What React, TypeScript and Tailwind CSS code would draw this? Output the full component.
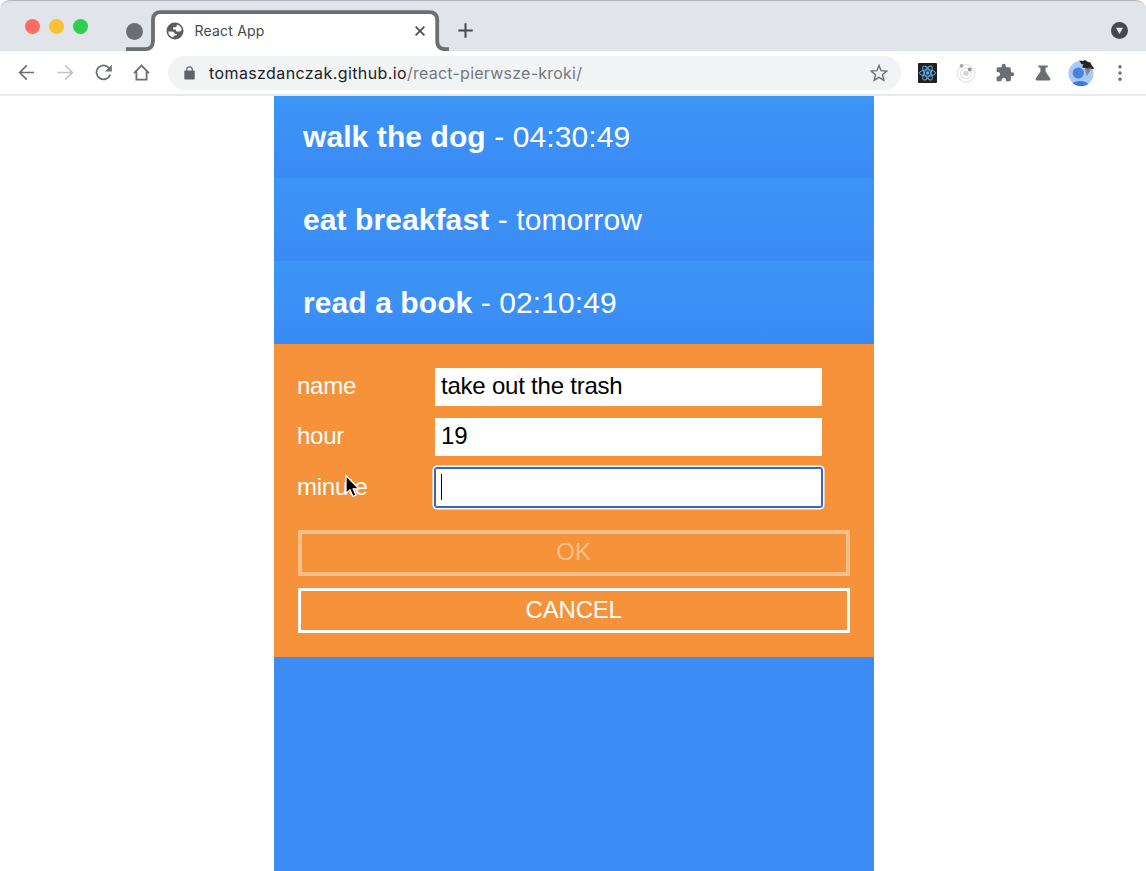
import React from "react";

const tasks = [
  { name: "walk the dog", time: "04:30:49", box: "h-[82px]" },
  { name: "eat breakfast", time: "tomorrow", box: "h-[83px]" },
  { name: "read a book", time: "02:10:49", box: "h-[83px]" },
];

function Globe() {
  return (
    <svg className="h-[18px] w-[18px] shrink-0" viewBox="0 0 18 18">
      <circle cx="9" cy="9" r="8.5" fill="#5a5c60" />
      <path d="M2.2 9.4 H5.6 Q8.6 9.4 8.8 12 H10.6 V13.6 H7.6 V15.6 Q2.6 14.4 2.2 9.4 Z" fill="#fff" />
      <path d="M10.8 2.4 Q14.8 3.4 15.8 7.6 L14.4 9.4 H10.6 Q9.8 9.2 9.8 7.6 H7.2 V5.2 H9.4 Q10.8 5 10.8 3.8 Z" fill="#fff" />
    </svg>
  );
}

function TabStrip() {
  return (
    <div className="bg-white">
      <div className="relative flex h-[51px] items-center rounded-t-[10px] border-t border-[#b4b5b8] bg-[#e1e4e9]">
        <svg className="absolute left-[125px] top-[-1px] h-[52px] w-[325px]" viewBox="0 0 325 52">
          <path d="M1 51 H19 Q28 50 28 41 V20 Q28 12 36 12 H304 Q312 12 312 20 V41 Q312 50 323 51 V52 H1 Z" fill="#fff" />
          <path d="M1 49.2 H20 Q28 49.2 28 41 V20 Q28 12.2 36 12.2 H304 Q312.2 12.2 312.2 20 V41 Q312.2 49.2 321 49.2 H324" fill="none" stroke="#6b6e72" strokeWidth="3.8" />
        </svg>
        <div className="relative flex h-full w-full items-center">
          <div className="ml-[25px] flex h-[52px] items-start gap-[9px] pt-[18.5px]">
            <span className="h-[15px] w-[15px] rounded-full bg-[#fe6b60]" />
            <span className="h-[15px] w-[15px] rounded-full bg-[#fcc034]" />
            <span className="h-[15px] w-[15px] rounded-full bg-[#2dd04a]" />
          </div>
          <span className="ml-[38px] mt-[10px] h-[17px] w-[17px] rounded-full bg-[#6b6e72]" />
          <div className="ml-[23px] mt-[9px] flex w-[260px] items-center">
            <Globe />
            <span className="ml-[10.5px] grow font-['Inter','Roboto',sans-serif] text-[14px] tracking-[0.2px] text-[#46484c]">React App</span>
            <svg className="h-[12px] w-[12px]" viewBox="0 0 12 12">
              <path d="M1.6 1.6 L10.4 10.4 M10.4 1.6 L1.6 10.4" stroke="#46484c" strokeWidth="1.6" />
            </svg>
          </div>
          <svg className="ml-[32px] mt-[9px] h-[15px] w-[15px]" viewBox="0 0 15 15">
            <path d="M7.5 0.3 V14.7 M0.3 7.5 H14.7" stroke="#46484c" strokeWidth="2" />
          </svg>
          <svg className="ml-auto mr-[18px] mt-[9px] h-[17px] w-[17px]" viewBox="0 0 17 17">
            <circle cx="8.5" cy="8.5" r="8.5" fill="#46484c" />
            <path d="M4.9 5.8 H12.1 L8.5 12 Z" fill="#e1e4e9" />
          </svg>
        </div>
      </div>
    </div>
  );
}

function Toolbar() {
  return (
    <div className="flex h-[43px] shrink-0 items-center bg-white">
      <svg className="ml-[18px] h-[17px] w-[17px]" viewBox="0 0 17 17" fill="none" stroke="#6b6e72" strokeWidth="1.7">
        <path d="M16 8.5 H2 M8.8 1.4 L1.7 8.5 L8.8 15.6" />
      </svg>
      <svg className="ml-[22px] h-[17px] w-[17px]" viewBox="0 0 17 17" fill="none" stroke="#c3c4c6" strokeWidth="1.7">
        <path d="M0.5 8.5 H15 M8.2 1.4 L15.3 8.5 L8.2 15.6" />
      </svg>
      <svg className="ml-[21px] h-[17px] w-[17px]" viewBox="0 0 17 17">
        <path d="M14.2 4.2 A7 7 0 1 0 15.2 10.4" fill="none" stroke="#6b6e72" strokeWidth="1.8" />
        <path d="M16.8 0.8 V7.5 H10 Z" fill="#6b6e72" />
      </svg>
      <svg className="ml-[21px] h-[17px] w-[17px]" viewBox="0 0 17 17" fill="none" stroke="#6b6e72" strokeWidth="1.8">
        <path d="M1 9.2 L8.5 1.6 L16 9.2 M3.4 7.4 V15.6 H13.6 V7.4" />
      </svg>
      <div className="ml-[18px] flex h-[34px] w-[733px] items-center rounded-full bg-[#f1f3f4] pl-[16px] pr-[13px]">
        <svg className="h-[14px] w-[11px]" viewBox="0 0 11 14">
          <rect x="0.3" y="4.6" width="10.4" height="8.9" rx="1" fill="#5f6368" />
          <path d="M2.7 6 V3.6 A2.8 2.8 0 0 1 8.3 3.6 V6" fill="none" stroke="#5f6368" strokeWidth="1.2" />
        </svg>
        <span className="ml-[14px] grow whitespace-nowrap font-['Inter','Roboto',sans-serif] text-[16px] tracking-[0.4px] text-[#202124]">
          tomaszdanczak.github.io<span className="tracking-[0.24px] text-[#75787c]">/react-pierwsze-kroki/</span>
        </span>
        <svg className="h-[18px] w-[18px]" viewBox="0 0 18 18">
          <path d="M9 1.5 L11.1 6.7 L16.8 7.1 L12.5 10.8 L13.9 16.3 L9 13.3 L4.1 16.3 L5.5 10.8 L1.2 7.1 L6.9 6.7 Z" fill="none" stroke="#6b6e72" strokeWidth="1.4" />
        </svg>
      </div>
      <svg className="ml-[17px] h-[20px] w-[19px]" viewBox="0 0 19 20" fill="none" stroke="#5fabe8">
        <rect width="19" height="20" rx="1" fill="#202020" stroke="none" />
        <g strokeWidth="1">
          <ellipse cx="9.5" cy="10" rx="8" ry="3.1" />
          <ellipse cx="9.5" cy="10" rx="8" ry="3.1" transform="rotate(60 9.5 10)" />
          <ellipse cx="9.5" cy="10" rx="8" ry="3.1" transform="rotate(120 9.5 10)" />
        </g>
        <circle cx="9.5" cy="10" r="1.7" fill="#5fabe8" stroke="none" />
      </svg>
      <svg className="ml-[19px] h-[20px] w-[20px]" viewBox="0 0 20 20">
        <circle cx="10" cy="10.3" r="8.8" fill="none" stroke="#dedede" />
        <circle cx="10" cy="10.3" r="5.4" fill="none" stroke="#dedede" />
        <circle cx="10" cy="10.3" r="2.6" fill="#d5d5d5" />
        <circle cx="5.5" cy="2.8" r="1.9" fill="#a4a4a4" />
        <circle cx="13.8" cy="6.5" r="1.9" fill="#929292" />
      </svg>
      <svg className="ml-[18.5px] h-[20px] w-[20px]" viewBox="0 0 24 24" fill="#6b6e72">
        <path d="M20.5 11H19V7c0-1.1-.9-2-2-2h-4V3.5a2.5 2.5 0 0 0-5 0V5H4c-1.1 0-1.99.9-1.99 2v3.8H3.5c1.49 0 2.7 1.21 2.7 2.7s-1.21 2.7-2.7 2.7H2V20c0 1.1.9 2 2 2h3.8v-1.5c0-1.49 1.21-2.7 2.7-2.7s2.7 1.21 2.7 2.7V22H17c1.1 0 2-.9 2-2v-4h1.5a2.5 2.5 0 0 0 0-5z" />
      </svg>
      <svg className="ml-[20.5px] h-[16px] w-[16px]" viewBox="0 0 16 16" fill="#6b6e72">
        <path d="M3.3 0.6 H12.7 V2.4 H10.6 V6.4 L15.2 13.5 Q16 15.4 14 15.5 H2 Q0 15.4 0.8 13.5 L5.4 6.4 V2.4 H3.3 Z" />
      </svg>
      <svg className="ml-[17px] h-[28px] w-[28px]" viewBox="0 0 28 28">
        <clipPath id="avatar"><circle cx="13" cy="14.5" r="12.7" /></clipPath>
        <g clipPath="url(#avatar)">
          <circle cx="13" cy="14.5" r="12.7" fill="#a7caf4" />
          <circle cx="10.3" cy="14" r="5.6" fill="#4b83dc" />
          <ellipse cx="12" cy="26" rx="8.5" ry="4" fill="#4079d6" />
        </g>
        <path d="M11 1.5 L15 2 L17 1 L20 3 L22.5 3.5 L24 7 L26.5 9.5 L24 10 L22 9.5 L19 11 L17.5 9 L14 8.5 L15.5 5.5 L13.5 5 Z" fill="#252423" />
        <path d="M17 9 L23.5 8.5 L21.5 13 L19 17 L17.5 13 Z" fill="#77736f" fillOpacity="0.75" />
      </svg>
      <svg className="ml-[21px] h-[18px] w-[6px]" viewBox="0 0 6 18" fill="#6b6e72">
        <circle cx="3" cy="2.8" r="1.7" />
        <circle cx="3" cy="9" r="1.7" />
        <circle cx="3" cy="15.2" r="1.7" />
      </svg>
    </div>
  );
}

function Field({ label, value, focused }: { label: string; value: string; focused?: boolean }) {
  return (
    <div className="flex h-[38.5px] items-center">
      <label className="w-[138px] pb-[1.5px] tracking-[-0.25px] text-white">{label}</label>
      <div
        className={
          focused
            ? "flex h-full w-[387px] items-center rounded-[2px] bg-white px-[6px] text-black shadow-[0_0_0_1px_#2f68cc,inset_0_0_0_1px_#2f68cc,0_0_0_2.5px_#fff]"
            : "flex h-full w-[387px] items-center bg-white px-[6px] pb-[1.5px] tracking-[-0.22px] text-black"
        }
      >
        {focused ? <span className="h-[26px] w-px bg-black" /> : value}
      </div>
    </div>
  );
}

export default function App() {
  return (
    <div className="flex h-[871px] w-[1146px] flex-col overflow-hidden bg-white font-['Liberation_Sans',Arial,sans-serif]">
      <TabStrip />
      <Toolbar />
      <div className="h-[2px] shrink-0 bg-[#e8e9ea]" />
      <main className="ml-[273.7px] flex w-[600px] grow flex-col bg-[#3b8cf5]">
        {tasks.map((t) => (
          <div key={t.name} className={`${t.box} flex shrink-0 items-center whitespace-pre bg-linear-to-b from-[#3d95f8] to-[#3a8bf4] pl-[29.3px] text-[30px] leading-none tracking-[0.09px] text-white`}>
            <strong>{t.name}</strong> - {t.time}
          </div>
        ))}
        <form className="flex h-[313.4px] shrink-0 flex-col bg-[#f69239] px-[24px] pt-[23.5px] text-[24px] leading-none">
          <div className="-ml-[0.7px] flex flex-col gap-[11.75px]">
            <Field label="name" value="take out the trash" />
            <Field label="hour" value="19" />
            <div className="relative">
              <Field label="minute" value="" focused />
              <svg className="absolute left-[47px] top-[6px] h-[26px] w-[18px]" viewBox="0 0 18 26">
                <path d="M2 1.5 V19.5 L6 15.8 L9 22.5 L12 21.2 L9.2 14.8 H14.8 Z" fill="#000" stroke="#fff" strokeWidth="1.3" />
              </svg>
            </div>
          </div>
          <button type="button" className="mt-[23.4px] flex h-[46px] w-[552px] shrink-0 items-center justify-center border-4 border-[#fabe8b] pb-[2px] text-[#fabe8b]">OK</button>
          <button type="button" className="mt-[12px] flex h-[45px] w-[552px] shrink-0 items-center justify-center border-[3px] border-white pb-[1px] tracking-[-0.2px] text-white">CANCEL</button>
        </form>
      </main>
    </div>
  );
}
